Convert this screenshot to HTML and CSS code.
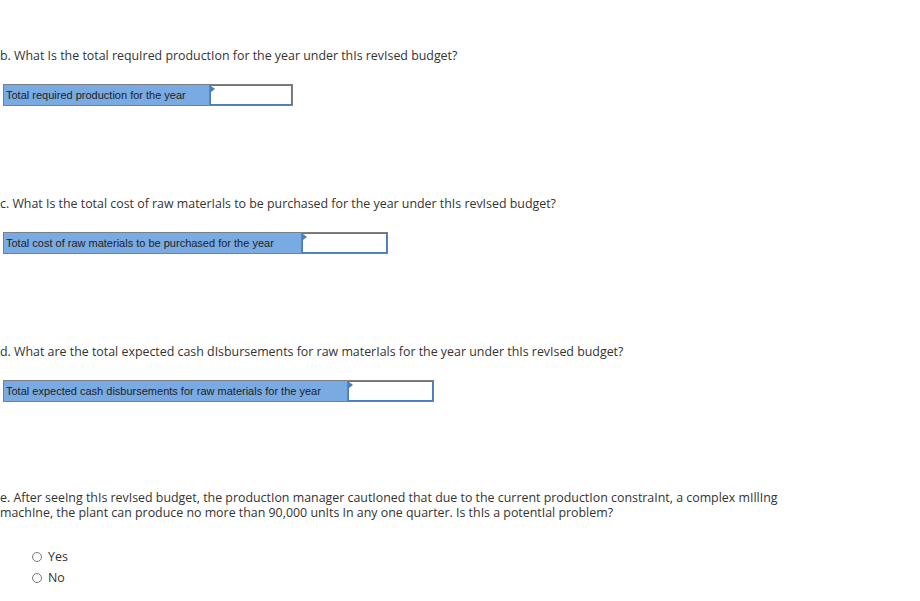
FILE: index.html
```html
<!DOCTYPE html>
<html lang="en">
  <head>
    <meta charset="UTF-8" />
    <title>Revised budget</title>
    <link rel="stylesheet" href="styles.css">
  </head>
  <body>
    <section class="part">
      <p class="question">b. What Is the total requIred productIon for the year under thIs revIsed budget?</p>
      <table class="answer">
        <tr>
          <td class="label label-b">Total required production for the year</td>
          <td class="field"><input type="text" /></td>
        </tr>
      </table>
    </section>

    <section class="part">
      <p class="question">c. What Is the total cost of raw materIals to be purchased for the year under thIs revIsed budget?</p>
      <table class="answer">
        <tr>
          <td class="label label-c">Total cost of raw materials to be purchased for the year</td>
          <td class="field wide"><input type="text" /></td>
        </tr>
      </table>
    </section>

    <section class="part">
      <p class="question">d. What are the total expected cash dIsbursements for raw materIals for the year under thIs revIsed budget?</p>
      <table class="answer">
        <tr>
          <td class="label label-d">Total expected cash disbursements for raw materials for the year</td>
          <td class="field wide"><input type="text" /></td>
        </tr>
      </table>
    </section>

    <section class="part last">
      <p class="question">e. After seeIng thIs revIsed budget, the productIon manager cautIoned that due to the current productIon constraInt, a complex mIllIng machIne, the plant can produce no more than 90,000 unIts In any one quarter. Is thIs a potentIal problem?</p>
      <ul class="choices">
        <li><span class="radio"></span>Yes</li>
        <li><span class="radio"></span>No</li>
      </ul>
    </section>
  </body>
</html>
```

FILE: styles.css
```css
body {
  margin: 0;
  padding-top: 48px;
  font-family: "Open Sans", Lato, sans-serif;
  color: #333;
  background: #fff;
}
.part {
  height: 148px;
}
.part.last {
  height: auto;
  margin-top: -2px;
}
.question {
  margin: 0;
  font-size: 12.4px;
  line-height: 15px;
  max-width: 800px;
}
.answer {
  margin: 21px 0 0 3px;
  border-collapse: collapse;
  border: 1px solid #7f7f7f;
  font-family: "Liberation Sans", Arial, sans-serif;
  font-size: 11px;
}
.answer td {
  padding: 0;
  height: 20px;
}
.label {
  background: #7aaae2;
  color: #1e1e1e;
  padding-left: 2px !important;
  white-space: nowrap;
}
.label-b {
  width: 203px;
}
.label-c {
  width: 295px;
}
.label-d {
  width: 341px;
}
.field {
  position: relative;
  width: 82px;
  border-left: 1px solid #7f7f7f;
}
.field.wide {
  width: 85px;
}
.field input {
  display: block;
  box-sizing: border-box;
  width: 100%;
  height: 20px;
  margin: 0;
  border: 1px solid #4a7cc0;
  outline: none;
  background: #fff;
}
.field::before {
  content: "";
  position: absolute;
  left: 1px;
  top: 1px;
  border-left: 4px solid #4a7cc0;
  border-top: 3px solid transparent;
  border-bottom: 3px solid transparent;
}
.choices {
  list-style: none;
  margin: 26px 0 0 32px;
  padding: 0;
  font-size: 12.4px;
}
.choices li {
  display: flex;
  align-items: center;
  height: 21px;
}
.radio {
  width: 8px;
  height: 8px;
  border: 1px solid #777;
  border-radius: 50%;
  margin-right: 6px;
}
```
